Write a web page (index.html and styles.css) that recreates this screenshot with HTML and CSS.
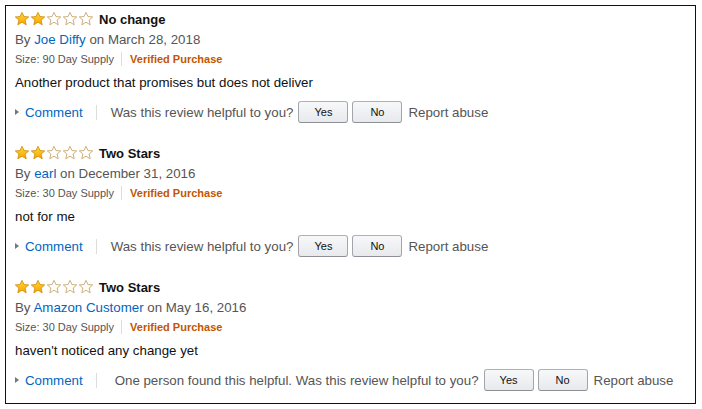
FILE: index.html
```html
<!DOCTYPE html>
<html lang="en">

<head>
  <meta charset="UTF-8">
  <title>Reviews</title>
  <link rel="stylesheet" href="styles.css">
</head>

<body>
  <div class="page">
    <div class="reviews">
      <!--review 1-->
      <div class="review">
        <div class="title">
          <svg class="stars" width="80" height="14" viewBox="0 0 80 14">
            <defs>
              <linearGradient id="gold" x1="0" y1="0" x2="0" y2="1">
                <stop offset="0" stop-color="#ffd83a" />
                <stop offset="1" stop-color="#f3a600" />
              </linearGradient>
              <polygon id="star" points="7,0.4 9,4.6 13.7,4.9 10.1,8 11.2,12.8 7,10.2 2.8,12.8 3.9,8 0.3,4.9 5,4.6" />
            </defs>
            <use href="#star" x="0" class="on" />
            <use href="#star" x="16" class="on" />
            <use href="#star" x="32" class="off" />
            <use href="#star" x="48" class="off" />
            <use href="#star" x="64" class="off" />
          </svg>
          <b>No change</b>
        </div>
        <div class="byline">By <a href="#">Joe Diffy</a> on March 28, 2018</div>
        <div class="meta"><span>Size: 90 Day Supply</span><i></i><span class="verified">Verified Purchase</span></div>
        <div class="text">Another product that promises but does not deliver</div>
        <div class="actions">
          <a href="#" class="comment">Comment</a>
          <i></i>
          <span class="ask">Was this review helpful to you?</span>
          <button>Yes</button>
          <button>No</button>
          <span class="abuse">Report abuse</span>
        </div>
      </div>
      <!--review 2-->
      <div class="review">
        <div class="title">
          <svg class="stars" width="80" height="14" viewBox="0 0 80 14">
            <use href="#star" x="0" class="on" />
            <use href="#star" x="16" class="on" />
            <use href="#star" x="32" class="off" />
            <use href="#star" x="48" class="off" />
            <use href="#star" x="64" class="off" />
          </svg>
          <b>Two Stars</b>
        </div>
        <div class="byline">By <a href="#">earl</a> on December 31, 2016</div>
        <div class="meta"><span>Size: 30 Day Supply</span><i></i><span class="verified">Verified Purchase</span></div>
        <div class="text">not for me</div>
        <div class="actions">
          <a href="#" class="comment">Comment</a>
          <i></i>
          <span class="ask">Was this review helpful to you?</span>
          <button>Yes</button>
          <button>No</button>
          <span class="abuse">Report abuse</span>
        </div>
      </div>
      <!--review 3-->
      <div class="review">
        <div class="title">
          <svg class="stars" width="80" height="14" viewBox="0 0 80 14">
            <use href="#star" x="0" class="on" />
            <use href="#star" x="16" class="on" />
            <use href="#star" x="32" class="off" />
            <use href="#star" x="48" class="off" />
            <use href="#star" x="64" class="off" />
          </svg>
          <b>Two Stars</b>
        </div>
        <div class="byline">By <a href="#">Amazon Customer</a> on May 16, 2016</div>
        <div class="meta"><span>Size: 30 Day Supply</span><i></i><span class="verified">Verified Purchase</span></div>
        <div class="text">haven't noticed any change yet</div>
        <div class="actions">
          <a href="#" class="comment">Comment</a>
          <i></i>
          <span class="ask count">One person found this helpful. Was this review helpful to you?</span>
          <button>Yes</button>
          <button>No</button>
          <span class="abuse">Report abuse</span>
        </div>
      </div>
    </div>
  </div>
</body>

</html>
```

FILE: styles.css
```css
* {
  margin: 0;
  padding: 0
}

body {
  background: #fff;
  font-family: "Liberation Sans", Arial, sans-serif;
  font-size: 13.3px;
  color: #111;
}

a {
  color: #0066c0;
  text-decoration: none
}

.page {
  padding: 5px;
}

.reviews {
  width: 680px;
  border: 1px solid #111;
  padding: 3px 0 12px 9px;
}

.review {
  margin-bottom: 20px;
}

.review:last-child {
  margin-bottom: 0;
}

.title {
  display: flex;
  align-items: center;
  height: 20px;
  font-size: 13px;
}

.stars {
  margin-right: 4px;
  display: block;
}

.stars .on {
  fill: url(#gold);
  stroke: #d38700;
  stroke-width: 0.8;
}

.stars .off {
  fill: #fff;
  stroke: #c9a66b;
  stroke-width: 0.9;
}

.title b {
  font-weight: bold;
}

.byline {
  margin-top: 1px;
  line-height: 20px;
  color: #555;
}

.meta {
  display: flex;
  align-items: center;
  height: 18px;
  font-size: 11px;
  color: #555;
}

.meta i {
  width: 1px;
  height: 14px;
  background: #ddd;
  margin: 0 8px 0 7px;
}

.meta .verified {
  color: #c45500;
  font-weight: bold;
}

.text {
  margin-top: 5px;
  line-height: 20px;
}

.actions {
  margin-top: 8px;
  height: 22px;
  display: flex;
  align-items: center;
  color: #555;
}

.comment {
  display: flex;
  align-items: center;
}

.comment::before {
  content: "";
  width: 0;
  height: 0;
  border-left: 4px solid #777;
  border-top: 3.5px solid transparent;
  border-bottom: 3.5px solid transparent;
  margin-right: 6px;
}

.actions i {
  width: 1px;
  height: 15px;
  background: #ddd;
  margin: 0 14px 0 13px;
}

.ask.count {
  margin-left: 4px;
}

.actions button {
  width: 50px;
  height: 22px;
  margin-left: 5px;
  margin-right: 4px;
  border: 1px solid #adb1b8;
  border-color: #adb1b8 #a2a6ac #8d9096;
  border-radius: 3px;
  background: linear-gradient(#f7f8fa, #e7e9ec);
  font-family: "Liberation Sans", Arial, sans-serif;
  font-size: 11px;
  color: #111;
}

.actions button + button {
  margin-left: 0;
}

.abuse {
  margin-left: 2px;
}
```
